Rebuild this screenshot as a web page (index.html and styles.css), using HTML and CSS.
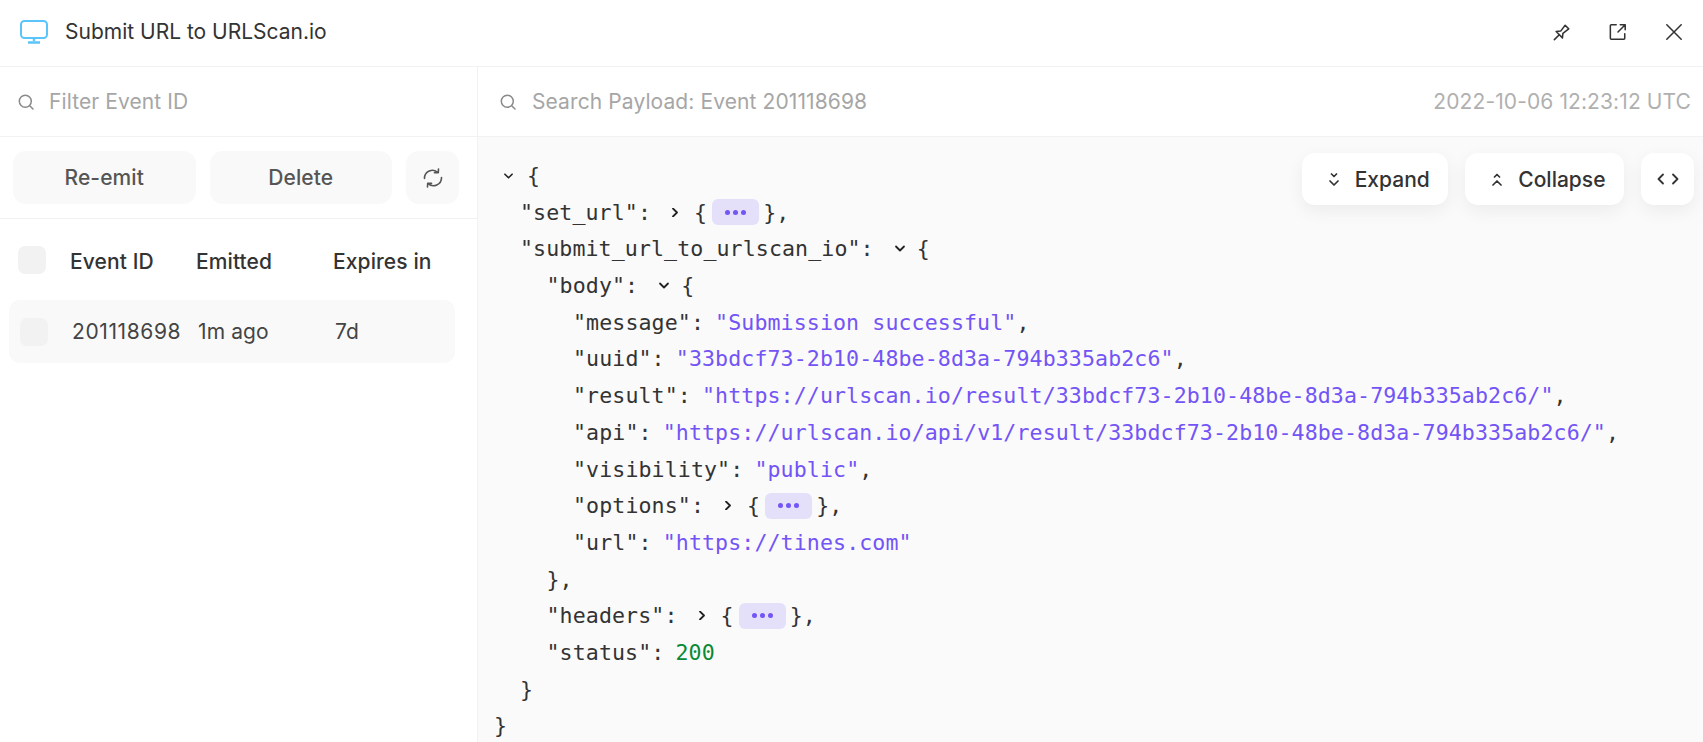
FILE: index.html
```html
<!DOCTYPE html>
<html lang="en">
<head>
<meta charset="utf-8">
<title>Submit URL to URLScan.io</title>
<link rel="stylesheet" href="styles.css">
</head>
<body>
<header class="topbar">
  <svg class="app-icon" viewBox="0 0 28 24" fill="none"><rect x="1" y="1" width="26" height="17" rx="3.5" stroke="#5ac4fb" stroke-width="2"/><path d="M14 18v3M8 22.500h12" stroke="#5ac4fb" stroke-width="2.400"/></svg>
  <h1 class="title">Submit URL to URLScan.io</h1>
  <div class="top-actions">
    <svg class="top-icon" viewBox="0 0 20 20" fill="none" stroke="#333" stroke-width="1.700" stroke-linejoin="round" stroke-linecap="round"><path d="M1.500 18.500l5.500-5.500M3.500 9.500l7 7 .5-5 6.500-5-4-4-5 6.500z"/></svg>
    <svg class="top-icon" viewBox="0 0 20 20" fill="none" stroke="#333" stroke-width="1.700" stroke-linejoin="round" stroke-linecap="round"><path d="M8 2H2.500A1 1 0 0 0 1.500 3v14a1 1 0 0 0 1 1h14a1 1 0 0 0 1-1v-5M10 10l8-8M12.500 2H18v5.500"/></svg>
    <svg class="top-icon" viewBox="0 0 20 20" fill="none" stroke="#333" stroke-width="1.700" stroke-linecap="round"><path d="M2 2l16 16M18 2L2 18"/></svg>
  </div>
</header>
<main class="panels">
  <aside class="sidebar">
    <div class="search-row">
      <svg class="search-icon" viewBox="0 0 16 16" fill="none" stroke="#8a8a8a" stroke-width="1.500" stroke-linecap="round"><circle cx="7.300" cy="7.300" r="6"/><path d="M12 12l3 3"/></svg>
      <span class="placeholder">Filter Event ID</span>
    </div>
    <div class="button-row">
      <button class="btn btn-wide">Re-emit</button>
      <button class="btn btn-wide">Delete</button>
      <button class="btn btn-icon" aria-label="Refresh">
        <svg viewBox="0 0 20 20" width="20" height="20" fill="none" stroke="#555" stroke-width="1.600" stroke-linecap="round" stroke-linejoin="round"><path d="M1.500 10.500A8 8 0 0 1 15 4.500M15.500 1l-.2 3.800-3.800-.2M18.500 9.500A8 8 0 0 1 5 15.500M4.500 19l.2-3.800 3.800.2"/></svg>
      </button>
    </div>
    <div class="table-head">
      <span class="check"></span>
      <span class="col-id">Event ID</span>
      <span class="col-em">Emitted</span>
      <span class="col-ex">Expires in</span>
    </div>
    <div class="table-row">
      <span class="check"></span>
      <span class="col-id">201118698</span>
      <span class="col-em">1m ago</span>
      <span class="col-ex">7d</span>
    </div>
  </aside>
  <section class="payload">
    <div class="payload-search">
      <svg class="search-icon" viewBox="0 0 16 16" fill="none" stroke="#8a8a8a" stroke-width="1.500" stroke-linecap="round"><circle cx="7.300" cy="7.300" r="6"/><path d="M12 12l3 3"/></svg>
      <span class="placeholder">Search Payload: Event 201118698</span>
      <span class="timestamp">2022-10-06 12:23:12 UTC</span>
    </div>
    <div class="viewer">
      <div class="viewer-tools">
        <button class="tool">
          <svg width="10" height="15" viewBox="0 0 10 15" fill="none" stroke="#333" stroke-width="1.700" stroke-linecap="round" stroke-linejoin="round"><path d="M2.500 2L5 4.500 7.500 2M1 9l4 4 4-4"/></svg>
          Expand
        </button>
        <button class="tool">
          <svg width="10" height="15" viewBox="0 0 10 15" fill="none" stroke="#333" stroke-width="1.700" stroke-linecap="round" stroke-linejoin="round"><path d="M2.500 5L5 2.500 7.500 5M1 13l4-4 4 4"/></svg>
          Collapse
        </button>
        <button class="tool tool-icon" aria-label="Raw">
          <svg width="22" height="14" viewBox="0 0 22 14" fill="none" stroke="#333" stroke-width="1.800" stroke-linecap="round" stroke-linejoin="round"><path d="M6 2.500L1.500 7 6 11.500M16 2.500L20.500 7 16 11.500"/></svg>
        </button>
      </div>
      <div class="json">
        <div class="line"><svg class="root-chev" viewBox="0 0 10 6"><path d="M1 1l4 4 4-4"/></svg>{</div>
        <div class="line i1">"set_url":<svg class="chev" viewBox="0 0 30 9"><path d="M9 .5l4 4-4 4"/></svg>{<span class="more"><i></i><i></i><i></i></span>},</div>
        <div class="line i1">"submit_url_to_urlscan_io":<svg class="chev" viewBox="0 0 30 9"><path d="M9 2.500l4 4 4-4"/></svg>{</div>
        <div class="line i2">"body":<svg class="chev" viewBox="0 0 30 9"><path d="M9 2.500l4 4 4-4"/></svg>{</div>
        <div class="line i3">"message": <span class="str">"Submission successful"</span>,</div>
        <div class="line i3">"uuid": <span class="str">"33bdcf73-2b10-48be-8d3a-794b335ab2c6"</span>,</div>
        <div class="line i3">"result": <span class="str">"https://urlscan.io/result/33bdcf73-2b10-48be-8d3a-794b335ab2c6/"</span>,</div>
        <div class="line i3">"api": <span class="str">"https://urlscan.io/api/v1/result/33bdcf73-2b10-48be-8d3a-794b335ab2c6/"</span>,</div>
        <div class="line i3">"visibility": <span class="str">"public"</span>,</div>
        <div class="line i3">"options":<svg class="chev" viewBox="0 0 30 9"><path d="M9 .5l4 4-4 4"/></svg>{<span class="more"><i></i><i></i><i></i></span>},</div>
        <div class="line i3">"url": <span class="str">"https://tines.com"</span></div>
        <div class="line i2">},</div>
        <div class="line i2">"headers":<svg class="chev" viewBox="0 0 30 9"><path d="M9 .5l4 4-4 4"/></svg>{<span class="more"><i></i><i></i><i></i></span>},</div>
        <div class="line i2">"status": <span class="num">200</span></div>
        <div class="line i1">}</div>
        <div class="line">}</div>
      </div>
    </div>
  </section>
</main>
</body>
</html>
```
FILE: styles.css
```css
* { box-sizing: border-box; }
html, body { margin: 0; height: 742px; overflow: hidden; }
body { background: #fff; color: #333; font-family: Inter, "Liberation Sans", sans-serif; letter-spacing: .1px; }

.topbar { height: 67px; display: flex; align-items: center; padding: 0 20px 2px 20px; border-bottom: 1px solid #f2f2f2; }
.app-icon { width: 28px; height: 24px; flex: none; }
.title { margin: 0 0 0 17px; font-size: 21px; font-weight: 400; line-height: 30px; letter-spacing: 0; color: #333; }
.top-actions { margin-left: auto; display: flex; gap: 38px; }
.top-icon { width: 18px; height: 18px; display: block; }

.panels { display: flex; height: 675px; }
.sidebar { width: 478px; flex: none; border-right: 1px solid #f2f2f2; }

.search-row { height: 70px; display: flex; align-items: center; padding-left: 18px; border-bottom: 1px solid #f2f2f2; }
.search-icon { width: 16px; height: 16px; flex: none; }
.placeholder { margin-left: 15px; font-size: 21px; color: #a6a6a6; }

.button-row { display: flex; gap: 14px; padding: 14px 0 14px 13px; border-bottom: 1px solid #f2f2f2; }
.btn { height: 53px; flex: none; border: 0; border-radius: 13px; background: #f9f9f9; color: #555; font: 500 21px Inter, sans-serif; letter-spacing: .1px; display: flex; align-items: center; justify-content: center; padding: 0; }
.btn-wide { width: 182.500px; }
.btn-icon { width: 53px; }

.table-head, .table-row { display: flex; align-items: center; font-size: 21px; }
.table-head { height: 81px; padding-left: 18px; font-weight: 500; }
.table-head span:not(.check) { margin-top: 3px; }
.table-row { height: 63px; margin-left: 9px; width: 446px; padding-left: 11px; background: #f9f9f9; border-radius: 11px; color: #444; }
.check { width: 28px; height: 28px; flex: none; border-radius: 7px; background: #f2f2f2; }
.col-id { margin-left: 24px; width: 126px; flex: none; }
.table-row .col-id { letter-spacing: .6px; }
.col-em { width: 137px; flex: none; }
.col-ex { flex: none; }

.payload { flex: 1; min-width: 0; display: flex; flex-direction: column; }
.payload-search { height: 70px; flex: none; display: flex; align-items: center; padding: 0 12px 0 22px; border-bottom: 1px solid #f2f2f2; }
.payload-search .placeholder { margin-left: 16px; }
.timestamp { margin-left: auto; font-size: 21px; color: #b0b0b0; }

.viewer { flex: 1; position: relative; background: #fafafa; padding: 21px 0 0 16px; overflow: hidden; }
.viewer-tools { position: absolute; top: 16px; right: 9px; display: flex; gap: 17.500px; }
.tool { height: 52px; padding: 0 18px 0 27px; border: 0; border-radius: 13px; background: #fff; color: #333; font: 500 21px Inter, sans-serif; display: flex; align-items: center; gap: 16px; box-shadow: 0 6px 18px rgba(0, 0, 0, .06); }
.tool-icon { width: 53px; padding: 0; justify-content: center; }

.json { font-family: "DejaVu Sans Mono", "Liberation Mono", monospace; font-size: 21.6px; letter-spacing: .1px; color: #333; }
.line { height: 36.7px; line-height: 36.7px; display: flex; align-items: center; white-space: pre; }
.i1 { padding-left: 26px; }
.i2 { padding-left: 52.500px; }
.i3 { padding-left: 79px; }
.str { margin-left: -2px; color: #7354f5; }
.num { margin-left: -2px; color: #0a8a35; }
.root-chev { width: 9px; height: 6px; margin: 0 14px 0 10px; fill: none; stroke: #222; stroke-width: 1.800; stroke-linecap: round; stroke-linejoin: round; }
.chev { width: 30px; height: 9px; margin-left: 13px; margin-bottom: 2px; fill: none; stroke: #222; stroke-width: 1.800; stroke-linecap: round; stroke-linejoin: round; }
.more { width: 47px; height: 26px; margin: 0 4px 2px 5px; background: #e5e0fa; border-radius: 6px; display: flex; align-items: center; justify-content: center; gap: 3px; }
.more i { width: 5px; height: 5px; border-radius: 50%; background: #7354f5; }
```
